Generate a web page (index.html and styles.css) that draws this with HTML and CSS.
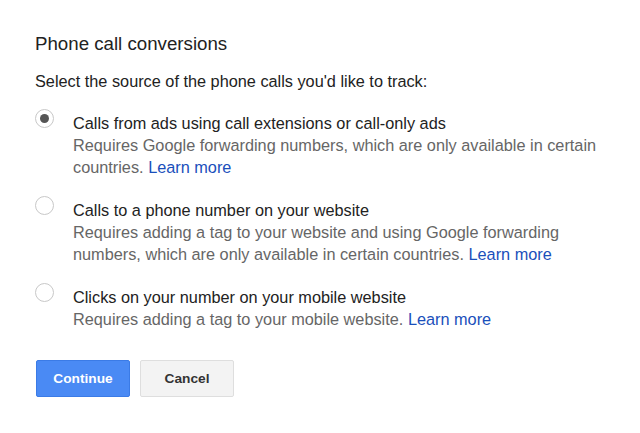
FILE: index.html
```html
<!DOCTYPE html>
<html lang="en">
<head>
    <meta charset="UTF-8">
    <title>Phone call conversions</title>
    <link rel="stylesheet" href="styles.css">
</head>
<body>
    <div class="panel">
        <div class="title">Phone call conversions</div>
        <div class="prompt">Select the source of the phone calls you'd like to track:</div>
        <div class="options">
            <label class="option">
                <input type="radio" name="source" checked>
                <span class="radio"></span>
                <span class="text">
                    <span class="name">Calls from ads using call extensions or call-only ads</span>
                    <span class="desc">Requires Google forwarding numbers, which are only available in certain countries. <a href="#">Learn more</a></span>
                </span>
            </label>
            <label class="option">
                <input type="radio" name="source">
                <span class="radio"></span>
                <span class="text">
                    <span class="name">Calls to a phone number on your website</span>
                    <span class="desc">Requires adding a tag to your website and using Google forwarding numbers, which are only available in certain countries. <a href="#">Learn more</a></span>
                </span>
            </label>
            <label class="option">
                <input type="radio" name="source">
                <span class="radio"></span>
                <span class="text">
                    <span class="name">Clicks on your number on your mobile website</span>
                    <span class="desc">Requires adding a tag to your mobile website. <a href="#">Learn more</a></span>
                </span>
            </label>
        </div>
        <div class="buttons">
            <button class="btn primary">Continue</button>
            <button class="btn">Cancel</button>
        </div>
    </div>
</body>
</html>
```

FILE: styles.css
```css
body {
    margin: 0;
    font-family: "Liberation Sans", Arial, sans-serif;
    background: #fff;
    color: #222;
}
.panel {
    padding: 32px 0 0 35px;
    width: 580px;
}
.title {
    font-size: 18.7px;
    line-height: 24px;
    margin-bottom: 14px;
}
.prompt {
    font-size: 16.3px;
    line-height: 22px;
    margin-bottom: 20px;
}
.options {
    display: flex;
    flex-direction: column;
    gap: 21px;
}
.option {
    display: flex;
    align-items: flex-start;
    font-size: 16.3px;
    line-height: 22px;
    cursor: pointer;
}
.option input {
    display: none;
}
.radio {
    flex: none;
    box-sizing: border-box;
    width: 19px;
    height: 19px;
    margin: -3px 19px 0 0;
    border: 1px solid #c8c8c8;
    border-radius: 50%;
    background: #fff;
    display: flex;
    align-items: center;
    justify-content: center;
}
.option input:checked + .radio::after {
    content: "";
    width: 9px;
    height: 9px;
    border-radius: 50%;
    background: #555;
}
.text {
    display: flex;
    flex-direction: column;
}
.name {
    color: #222;
}
.desc {
    color: #666;
}
.desc a {
    color: #1a4fbb;
    text-decoration: none;
}
.buttons {
    display: flex;
    gap: 10px;
    margin-top: 30px;
    padding-left: 1px;
}
.btn {
    box-sizing: border-box;
    width: 94px;
    height: 37px;
    font-family: inherit;
    font-size: 13.7px;
    font-weight: bold;
    color: #333;
    background: #f3f3f3;
    border: 1px solid #dedede;
    border-radius: 2px;
}
.btn.primary {
    color: #fff;
    background: #4a8af4;
    border-color: #3b7be6;
}
```
